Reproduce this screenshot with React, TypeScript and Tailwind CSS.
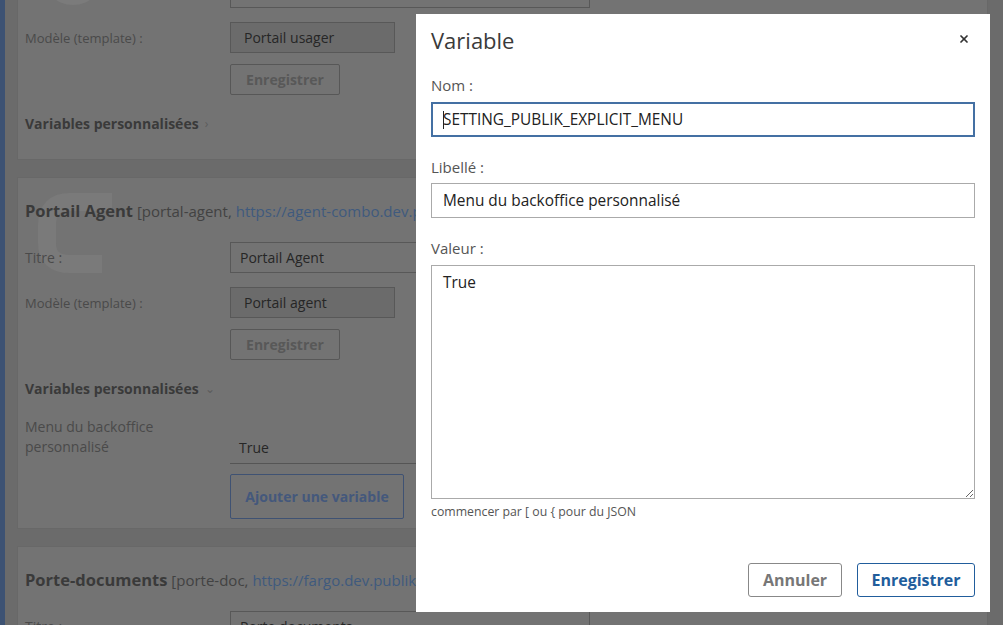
import { X } from "lucide-react";

// The page behind the dialog is drawn already dimmed by the modal backdrop.

type SiteCardProps = {
  title: string;
  slug: string;
  url: string;
  titleValue: string;
  template?: string;
  logo?: "circle" | "c";
  expanded?: boolean;
};

function FieldRow({
  label,
  labelClass = "text-[14px]",
  children,
}: {
  label: string;
  labelClass?: string;
  children: React.ReactNode;
}) {
  return (
    <div className="flex items-center">
      <div className={`w-[205px] shrink-0 leading-5 text-[#4a4a4a] ${labelClass}`}>{label}</div>
      {children}
    </div>
  );
}

function SiteCard({ title, slug, url, titleValue, template, logo, expanded = false }: SiteCardProps) {
  return (
    <section
      className={`relative border border-[#686868] bg-neutral-500 pl-[7px] pt-[21px] ${
        expanded ? "pb-[9px]" : "pb-[25px]"
      }`}
    >
      {logo === "circle" && (
        <div className="absolute left-[24px] top-[30px] h-[62px] w-[62px] rounded-full bg-[#7b7b7b]" />
      )}
      {logo === "c" && (
        <svg className="absolute left-[18px] top-[13px] h-[84px] w-[80px]" viewBox="0 0 80 84" fill="none">
          <path d="M76 11 H34 Q11 11 11 34 V52 Q11 73 34 73 H66" stroke="#7a7a7a" strokeWidth="18" />
        </svg>
      )}

      <h2 className="relative whitespace-nowrap text-[15px] leading-6 text-[#424242]">
        <span className="text-[16.5px] font-bold text-[#3a3a3a]">{title}</span> [{slug},{" "}
        <a className="text-[#3f5a7e]">{url}</a>]
      </h2>

      <div className="relative mt-[19px] flex flex-col">
        <FieldRow label="Titre :">
          <div className="flex h-[31px] w-[360px] items-start border border-[#585858] bg-neutral-500 px-[9px] pt-[4px] text-[14px] text-[#262626]">
            {titleValue}
          </div>
        </FieldRow>
        {template && (
          <>
            <div className="mt-[14px]">
              <FieldRow label="Modèle (template) :" labelClass="text-[13px]">
                <div className="flex h-[31px] w-[165px] items-center border border-[#585858] bg-[#6b6b6b] px-[13px] text-[14px] text-[#262626]">
                  {template}
                </div>
              </FieldRow>
            </div>
            <div className="mt-[11px] pl-[205px]">
              <button className="h-[31px] w-[110px] rounded-[2px] border border-[#575757] bg-neutral-500 text-[14px] font-bold text-[#585858]">
                Enregistrer
              </button>
            </div>
          </>
        )}

        <div className="mt-[19px] flex items-center gap-[6px] text-[14px] leading-5 font-bold text-[#3a3a3a]">
          Variables personnalisées
          <span className="text-[12px] font-normal text-[#5c5c5c]">{expanded ? "⌄" : "›"}</span>
        </div>

        {expanded && (
          <>
            <div className="mt-[18px] flex items-start">
              <div className="w-[205px] shrink-0 pr-[40px] text-[14px] leading-5 text-[#4a4a4a]">
                Menu du backoffice personnalisé
              </div>
              <div className="mt-[14px] flex h-[33px] w-[360px] items-center border-b border-[#555] px-[9px] text-[14px] text-[#262626]">
                True
              </div>
            </div>
            <div className="mt-[10px] pl-[205px]">
              <button className="h-[45px] w-[174px] rounded-[2px] border border-[#3f5273] bg-neutral-500 text-[14px] font-bold text-[#44587c]">
                Ajouter une variable
              </button>
            </div>
          </>
        )}
      </div>
    </section>
  );
}

export default function App() {
  return (
    <div className="relative h-[625px] w-[1003px] overflow-hidden bg-[#6b6b6b] font-['Open_Sans',sans-serif]">
      <div className="flex h-full">
        <div className="w-[5px] shrink-0 bg-[#3d5273]" />
        <main className="-mt-[88px] flex flex-1 flex-col gap-[17px] pl-[12px] pr-[15px]">
          <SiteCard
            title="Portail usager"
            slug="portal-user"
            url="https://combo.dev.publik.love/"
            titleValue="Portail"
            template="Portail usager"
            logo="circle"
          />
          <SiteCard
            title="Portail Agent"
            slug="portal-agent"
            url="https://agent-combo.dev.publik.love/"
            titleValue="Portail Agent"
            template="Portail agent"
            logo="c"
            expanded
          />
          <SiteCard
            title="Porte-documents"
            slug="porte-doc"
            url="https://fargo.dev.publik.love/"
            titleValue="Porte documents"
          />
        </main>
      </div>

      <div className="absolute left-[416px] top-[14px] z-20 flex h-[598px] w-[574px] flex-col bg-white px-[15px] pt-[12px] pb-[15px]">
        <div className="flex items-center justify-between">
          <h1 className="text-[22px] leading-[28px] text-[#3a3a3a]">Variable</h1>
          <button className="mr-[5px] mt-[-2px] text-[#333]">
            <X className="h-[12px] w-[12px]" strokeWidth={3.5} />
          </button>
        </div>

        <label className="mt-[21px] text-[15px] leading-5 text-[#555]">Nom :</label>
        <div className="relative mt-[7px]">
          <input
            readOnly
            value="SETTING_PUBLIK_EXPLICIT_MENU"
            className="h-[35px] w-full border-2 border-[#4470a3] px-[10px] text-[15.4px] text-[#222] outline-none"
          />
          <span className="absolute left-[12px] top-[9px] h-[18px] w-px bg-[#222]" />
        </div>

        <label className="mt-[20px] text-[15px] leading-5 text-[#555]">Libellé :</label>
        <input
          readOnly
          value="Menu du backoffice personnalisé"
          className="mt-[6px] h-[35px] w-full border border-[#aaa] px-[11px] text-[15.4px] text-[#222] outline-none"
        />

        <label className="mt-[20px] text-[15px] leading-5 text-[#555]">Valeur :</label>
        <textarea
          readOnly
          defaultValue="True"
          className="mt-[7px] h-[234px] w-full border border-[#aaa] px-[11px] pt-[7px] text-[15.4px] leading-5 text-[#222] outline-none"
        />
        <p className="mt-[5px] text-[12.3px] leading-4 text-[#555]">
          commencer par [ ou {"{"} pour du JSON
        </p>

        <div className="mt-auto flex justify-end gap-[15px]">
          <button className="h-[34px] w-[94px] rounded-[3px] border border-[#888] text-[16px] font-bold text-[#777]">
            Annuler
          </button>
          <button className="h-[34px] w-[118px] rounded-[3px] border border-[#215d9c] text-[16px] font-bold text-[#215d9c]">
            Enregistrer
          </button>
        </div>
      </div>
    </div>
  );
}
